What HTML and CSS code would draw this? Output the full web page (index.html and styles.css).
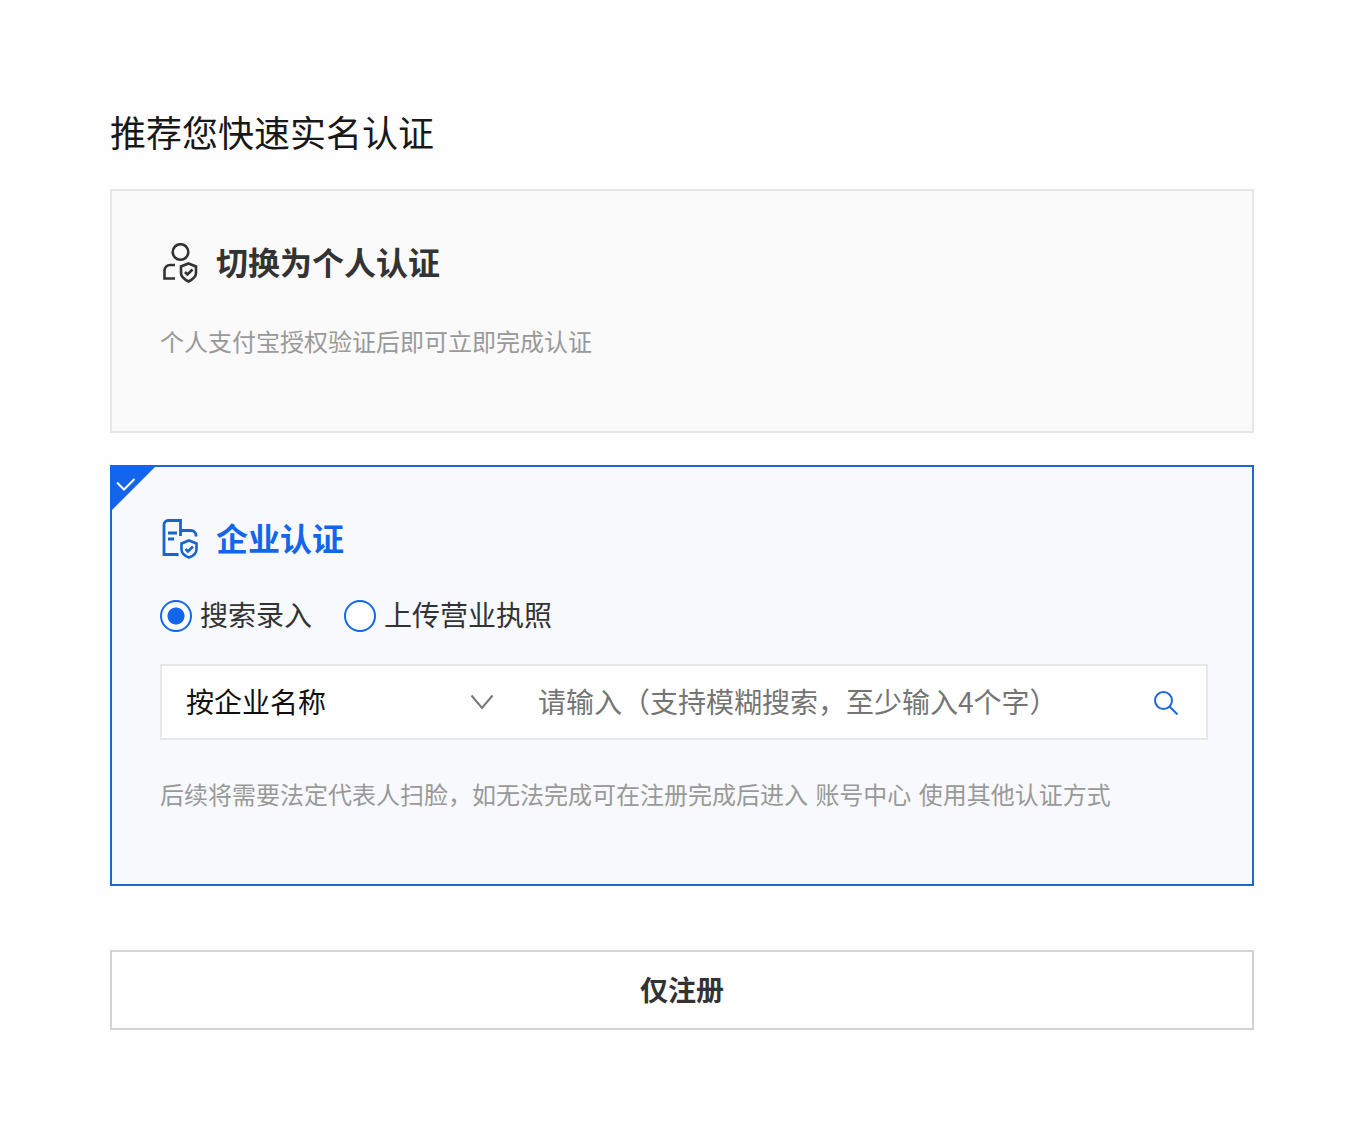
FILE: index.html
```html
<!DOCTYPE html>
<html lang="zh-CN">
  <head>
    <meta charset="UTF-8" />
    <meta name="viewport" content="width=device-width, initial-scale=1" />
    <title>实名认证</title>
    <link rel="stylesheet" href="styles.css">
  </head>
  <body>
    <main class="container">
      <h1>推荐您快速实名认证</h1>

      <section class="card">
        <div class="card-head">
          <svg class="card-icon" viewBox="0 0 40 40" fill="none" stroke="currentColor" stroke-width="2.600">
            <circle cx="20.500" cy="9" r="7.800" />
            <path d="M15 22H10a5.500 5.500 0 0 0-5.500 5.500V35.500H15" />
            <path d="M28.500 20.500L36 23.500V30c0 4-3.500 6.500-7.500 8.500C24.500 36.500 21 34 21 30V23.500Z" />
            <path d="M25 29l2.500 2.500 5-5" />
          </svg>
          <h2>切换为个人认证</h2>
        </div>
        <p class="desc">个人支付宝授权验证后即可立即完成认证</p>
      </section>

      <section class="card active">
        <span class="corner">
          <svg viewBox="0 0 48 48">
            <path d="M0 0H47L0 47Z" fill="#1366ec" />
            <path d="M7 17.500l7 7L24.500 14" fill="none" stroke="#fff" stroke-width="2" />
          </svg>
        </span>
        <div class="card-head">
          <svg class="card-icon" viewBox="0 0 40 40" fill="none" stroke="currentColor" stroke-width="2.800">
            <path d="M18.500 35.500H4V5.500a4 4 0 0 1 4-4H20.500V17" />
            <path d="M20.500 11.500H31a5 5 0 0 1 5 5V17.500" />
            <path d="M8 14h9M8 20h6" />
            <path d="M29 21.500L36.500 24.500V30.500c0 4-3.500 6.500-7.500 8C25 37 21.500 34.500 21.500 30.500V24.500Z" stroke-width="2.600" />
            <path d="M25.500 30l2.500 2.500 5-5" stroke-width="2.600" />
          </svg>
          <h2>企业认证</h2>
        </div>

        <div class="radios">
          <label><input type="radio" name="mode" value="search" checked />搜索录入</label>
          <label><input type="radio" name="mode" value="upload" />上传营业执照</label>
        </div>

        <form class="search">
          <div class="select-wrap">
            <select aria-label="搜索类型">
              <option>按企业名称</option>
            </select>
            <svg class="arrow" viewBox="0 0 24 16" fill="none" stroke="#777" stroke-width="2">
              <path d="M1.500 1.500L12 14 22.500 1.500" />
            </svg>
          </div>
          <input type="text" aria-label="企业名称" placeholder="请输入（支持模糊搜索，至少输入4个字）" />
          <button type="button" class="search-btn" aria-label="搜索">
            <svg viewBox="0 0 24 24" fill="none" stroke="currentColor" stroke-width="2">
              <circle cx="9.500" cy="9.500" r="8.500" />
              <path d="M15.500 15.500L23.500 23.500" />
            </svg>
          </button>
        </form>

        <p class="desc">后续将需要法定代表人扫脸，如无法完成可在注册完成后进入 <a href="#">账号中心</a> 使用其他认证方式</p>
      </section>

      <button type="button" class="register">仅注册</button>
    </main>
  </body>
</html>
```
FILE: styles.css
```css
* {
  box-sizing: border-box;
}

body {
  margin: 0;
  background: #fefefe;
  color: #333;
  font-family: "Noto Sans CJK SC", sans-serif;
}

.container {
  padding: 109px 106px 108px 110px;
}

h1 {
  margin: 0 0 36px;
  color: #181818;
  font-size: 36px;
  font-weight: 400;
  line-height: 44px;
}

.card {
  position: relative;
  margin-bottom: 32px;
  padding: 48px 44px 76px 48px;
  background: #fafafa;
  border: 2px solid #e6e6e6;
}

.card.active {
  margin-bottom: 64px;
  background: #f7f9fd;
  border-color: #1f68d2;
}

.corner {
  position: absolute;
  top: -2px;
  left: -2px;
  width: 48px;
  height: 48px;
}

.corner svg {
  display: block;
}

.card-head {
  display: flex;
  align-items: center;
  gap: 16px;
}

.card-icon {
  width: 40px;
  height: 40px;
}

h2 {
  margin: 0;
  padding-bottom: 4px;
  font-size: 32px;
  font-weight: 700;
  line-height: 44px;
}

.active .card-icon {
  color: #1767cb;
}

.active h2 {
  color: #1366ec;
}

.desc {
  margin: 40px 0 0;
  color: #999;
  font-size: 24px;
  line-height: 28px;
}

.desc a {
  padding: 0 2px;
  color: inherit;
  text-decoration: none;
}

.radios {
  display: flex;
  flex-wrap: wrap;
  gap: 32px;
  margin: 37px 0 32px;
}

.radios label {
  display: flex;
  gap: 8px;
  font-size: 28px;
  line-height: 28px;
}

.radios input {
  appearance: none;
  width: 32px;
  height: 32px;
  margin: 0;
  background: #fff;
  border: 2px solid #1366ec;
  border-radius: 50%;
}

.radios input:checked {
  background: radial-gradient(circle, #1366ec 8px, #fff 9px);
}

.search {
  display: flex;
  height: 76px;
  background: #fff;
  border: 2px solid #e6e7e9;
}

.search select,
.search input {
  height: 100%;
  padding: 0 24px 2px;
  background: none;
  border: 0;
  outline: 0;
  font-family: inherit;
  font-size: 28px;
}

.select-wrap {
  position: relative;
  width: 352px;
}

.search select {
  appearance: none;
  width: 100%;
  color: #111;
}

.arrow {
  position: absolute;
  top: 28px;
  right: 20px;
  width: 24px;
  height: 16px;
  pointer-events: none;
}

.search input {
  flex: 1;
  min-width: 0;
}

.search input::placeholder {
  color: #757575;
}

.search-btn {
  display: flex;
  align-items: center;
  padding: 2px 28px 0;
  background: none;
  border: 0;
  color: #1f68d8;
  cursor: pointer;
}

.search-btn svg {
  width: 24px;
  height: 24px;
}

.register {
  display: block;
  width: 100%;
  height: 80px;
  padding: 0 0 2px;
  background: #fff;
  border: 2px solid #d3d3d3;
  color: #333;
  font-family: inherit;
  font-size: 28px;
  font-weight: 700;
  cursor: pointer;
}
```
